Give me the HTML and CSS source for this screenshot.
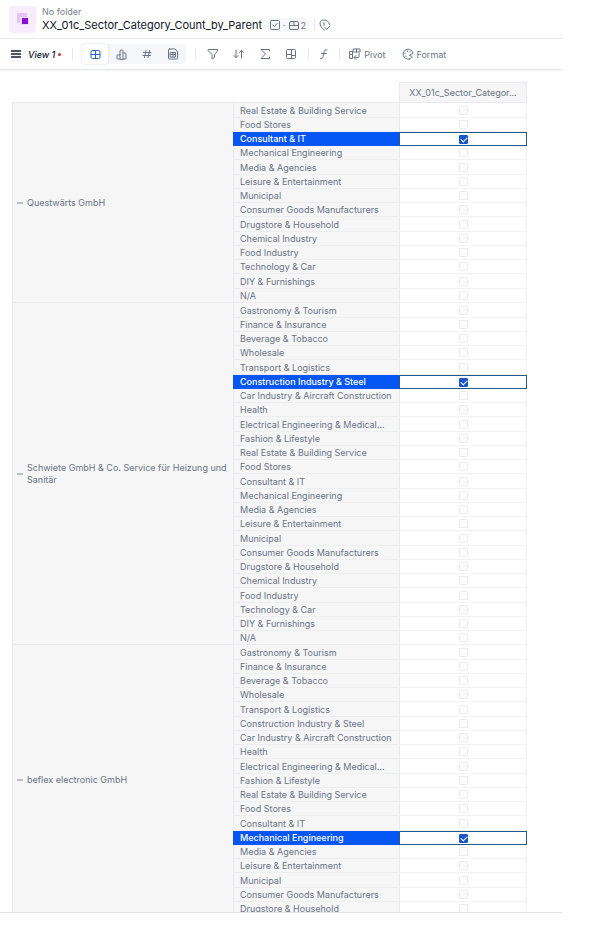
FILE: index.html
```html
<!DOCTYPE html>
<html lang="en">
<head>
  <meta charset="UTF-8">
  <meta name="viewport" content="width=device-width, initial-scale=1.0">
  <title>XX_01c_Sector_Category_Count_by_Parent</title>
  <link rel="stylesheet" href="styles.css">
</head>
<body>
  <div class="app">
    <header class="header">
      <div class="logo">
        <svg width="12" height="12" viewBox="0 0 12 12">
          <rect width="10" height="10" rx="1" fill="#e3c5f7"/>
          <rect x="3" y="4" width="9" height="8" rx="1" fill="#f0dcfb"/>
          <rect x="5" y="5" width="6" height="6" fill="#8a0fd6"/>
        </svg>
      </div>
      <div class="heading">
        <a class="folder" href="#">No folder</a>
        <div class="title-row">
          <h1 class="title">XX_01c_Sector_Category_Count_by_Parent</h1>
          <button class="badge" aria-label="Boolean metric, 2 dimensions">
            <svg class="icon" width="10" height="10" viewBox="0 0 20 20"><rect x="1" y="1" width="18" height="18" rx="2"/><path d="M6 10l3 3 5-6"/></svg>
            <span>·</span>
            <span class="badge-count"><svg class="icon" width="10" height="10" viewBox="0 0 20 20"><rect x="1" y="3" width="18" height="16" rx="3"/><path d="M1 11h18M10 3v8"/></svg>2</span>
          </button>
          <span class="divider"></span>
          <button class="tool-btn" aria-label="Access">
            <svg class="icon" width="12" height="12" viewBox="0 0 24 24"><path d="M11 22C5 18 2 14 2 8c0-3 3-6 8-6s10 3 11 9M10 7v6M12 17l3 4 7-7"/></svg>
          </button>
        </div>
      </div>
    </header>

    <nav class="toolbar">
      <button class="tool-btn view-btn">
        <svg class="icon icon-menu" width="10" height="10" viewBox="0 0 10 10"><path d="M0 2h10M0 5h10M0 8h10"/></svg>
        <span class="view-name">View 1</span>
        <span class="dot"></span>
      </button>
      <span class="divider"></span>
      <div class="switcher">
        <button class="switch-btn active" aria-label="Grid">
          <svg class="icon" width="11" height="11" viewBox="0 0 22 22"><rect x="2" y="3" width="18" height="16" rx="3"/><path d="M11 3v16M2 11h18"/></svg>
        </button>
        <button class="switch-btn" aria-label="Chart">
          <svg class="icon" width="11" height="11" viewBox="0 0 22 22"><path d="M8 20H3a1 1 0 0 1-1-1v-6a1 1 0 0 1 1-1h5M8 20V4a2 2 0 0 1 2-2h2a2 2 0 0 1 2 2v16zM14 8h4a2 2 0 0 1 2 2v9a1 1 0 0 1-1 1h-5"/></svg>
        </button>
        <button class="switch-btn" aria-label="Number">
          <svg class="icon" width="10" height="10" viewBox="0 0 20 20"><path d="M8 3L5 17M15 3l-3 14M3 7h15M2 13h15"/></svg>
        </button>
        <button class="switch-btn" aria-label="Table">
          <svg class="icon" width="12" height="12" viewBox="0 0 24 24"><path d="M5 2h11l5 5v13a2 2 0 0 1-2 2H5a2 2 0 0 1-2-2V4a2 2 0 0 1 2-2zM7 9h10v9H7zM12 9v9M7 13h10"/></svg>
        </button>
      </div>
      <span class="divider"></span>
      <div class="tools">
        <button class="tool-btn" aria-label="Filter">
          <svg class="icon" width="12" height="12" viewBox="0 0 24 24"><path d="M3 3h18v3l-6 7v6l-5 3v-9L3 6z"/></svg>
        </button>
        <button class="tool-btn" aria-label="Sort">
          <svg class="icon" width="12" height="12" viewBox="0 0 24 24"><path d="M6 4v15M2 15l4 4 4-4M17 20V5M13 9l4-4 4 4"/></svg>
        </button>
        <button class="tool-btn" aria-label="Aggregate">
          <svg class="icon" width="12" height="12" viewBox="0 0 24 24"><path d="M21 6V3H4l9 9-9 9h17v-3"/></svg>
        </button>
        <button class="tool-btn" aria-label="Layout">
          <svg class="icon" width="12" height="12" viewBox="0 0 24 24"><rect x="3" y="3" width="18" height="18" rx="2"/><path d="M13 3v18M3 13h10M13 15h8"/></svg>
        </button>
      </div>
      <span class="divider"></span>
      <button class="tool-btn" aria-label="Formula">
        <svg class="icon" width="12" height="12" viewBox="0 0 24 24"><path d="M18 4c-4-2-5 1-6 5l-2 8c-1 4-2 5-5 4M7 11h10"/></svg>
      </button>
      <span class="divider"></span>
      <div class="actions">
        <button class="tool-btn">
          <svg class="icon" width="12" height="12" viewBox="0 0 24 24"><path d="M9 2h13v6H9zM15 2v6M2 7h5v14H2zM2 13h5M20 11v6a2 2 0 0 1-2 2h-7M14 15l-4 4 4 4"/></svg>
          Pivot
        </button>
        <button class="tool-btn">
          <svg class="icon" width="12" height="12" viewBox="0 0 24 24"><path d="M15 22A10 10 0 1 1 22 10c0 4-7 1-7 6 2 0 4-1 5 1s-2 4-5 5zM8 16v1M6 10v1M11 6v1M16 7v1"/></svg>
          Format
        </button>
      </div>
    </nav>

    <main class="sheet">
      <table class="grid">
        <colgroup>
          <col class="col-parent">
          <col class="col-sector">
          <col>
        </colgroup>
        <thead>
          <tr>
            <td class="corner" colspan="2"></td>
            <th class="metric" scope="col">XX_01c_Sector_Categor...</th>
          </tr>
        </thead>
      </table>
    </main>
    <footer class="footer"></footer>
  </div>

  <script>
    const sectors = [
      "Gastronomy & Tourism", "Finance & Insurance", "Beverage & Tobacco", "Wholesale",
      "Transport & Logistics", "Construction Industry & Steel", "Car Industry & Aircraft Construction",
      "Health", "Electrical Engineering & Medical...", "Fashion & Lifestyle",
      "Real Estate & Building Service", "Food Stores", "Consultant & IT", "Mechanical Engineering",
      "Media & Agencies", "Leisure & Entertainment", "Municipal", "Consumer Goods Manufacturers",
      "Drugstore & Household", "Chemical Industry", "Food Industry", "Technology & Car",
      "DIY & Furnishings", "N/A"
    ];

    // from / to: the slice of sectors shown for each parent
    const parents = [
      { name: "Questwärts GmbH", from: 10, to: 24, selected: "Consultant & IT" },
      { name: "Schwiete GmbH & Co. Service für Heizung und Sanitär", from: 0, to: 24, selected: "Construction Industry & Steel" },
      { name: "beflex electronic GmbH", from: 0, to: 19, selected: "Mechanical Engineering" }
    ];

    const grid = document.querySelector(".grid");

    parents.forEach((parent) => {
      const group = document.createElement("tbody");
      const rows = sectors.slice(parent.from, parent.to);

      rows.forEach((sector, i) => {
        const row = group.insertRow();
        const isSelected = sector === parent.selected;
        row.className = isSelected ? "row selected" : "row";

        if (i === 0) {
          const head = document.createElement("th");
          head.className = "parent";
          head.scope = "rowgroup";
          head.rowSpan = rows.length;
          head.innerHTML = '<div class="parent-inner"><button class="collapse" aria-label="Collapse"></button><span></span></div>';
          head.querySelector("span").textContent = parent.name;
          row.appendChild(head);
        }

        const label = document.createElement("th");
        label.className = "sector";
        label.scope = "row";
        label.textContent = sector;
        row.appendChild(label);

        const box = document.createElement("input");
        box.type = "checkbox";
        box.className = "check";
        box.checked = isSelected;
        box.setAttribute("aria-label", parent.name + ", " + sector);
        const cell = row.insertCell();
        cell.className = "value";
        cell.appendChild(box);
      });

      grid.appendChild(group);
    });
  </script>
</body>
</html>
```
FILE: styles.css
```css
/* Reset */
* {
  margin: 0;
  padding: 0;
  box-sizing: border-box;
}

body {
  font-family: Inter, "Liberation Sans", sans-serif;
  font-size: 9px;
  color: #6b7486;
  background-color: #fff;
}

button {
  font: inherit;
  color: inherit;
  background: none;
  border: none;
  cursor: pointer;
}

.app {
  display: flex;
  flex-direction: column;
  height: 100vh;
  margin-right: 30px;
}

.icon {
  display: block;
  flex: none;
  fill: none;
  stroke: currentColor;
  stroke-width: 2;
  stroke-linecap: round;
  stroke-linejoin: round;
}

.divider {
  width: 1px;
  height: 12px;
  background-color: #e3e6ea;
}

/* Header */
.header {
  display: flex;
  align-items: center;
  gap: 6px;
  height: 39px;
  padding: 0 9px;
  border-bottom: 1px solid #e6e7ea;
}

.logo {
  display: flex;
  align-items: center;
  justify-content: center;
  width: 27px;
  height: 27px;
  border-radius: 3px;
  background-color: #f7edff;
}

.folder {
  display: block;
  line-height: 12px;
  color: #7c8493;
  text-decoration: none;
}

.title-row {
  display: flex;
  align-items: center;
  gap: 4px;
}

.title {
  font-size: 11px;
  font-weight: 400;
  line-height: 14px;
  color: #0d1526;
}

.badge {
  display: flex;
  align-items: center;
  gap: 3px;
  height: 14px;
  padding: 0 4px;
  border-radius: 7px;
  background-color: #f5f7f8;
}

.badge-count {
  display: flex;
  align-items: center;
  gap: 2px;
}

/* Toolbar */
.toolbar {
  display: flex;
  align-items: center;
  gap: 9px;
  height: 31px;
  padding: 0 11px;
  border-bottom: 1px solid #e6e7ea;
  box-shadow: 0 1px 1px rgba(20, 40, 70, 0.04);
}

.tool-btn {
  display: flex;
  align-items: center;
  gap: 3px;
}

.view-btn {
  padding-right: 2px;
  color: #10192b;
  font-weight: 500;
}

.view-name {
  margin-left: 4px;
  font-style: italic;
}

.icon-menu {
  stroke: #4b5362;
  stroke-linecap: butt;
}

.dot {
  width: 3px;
  height: 3px;
  border-radius: 50%;
  background-color: #c9303c;
}

.switcher {
  display: flex;
  height: 20px;
  border-radius: 4px;
  background-color: #f4f6f7;
}

.switch-btn {
  display: flex;
  align-items: center;
  justify-content: center;
  width: 26px;
  border-radius: 3px;
}

.switch-btn.active {
  color: #2468c4;
  background-color: #fff;
  box-shadow: 0 0 2px rgba(20, 40, 70, 0.2);
}

.tools {
  display: flex;
  gap: 14px;
  margin: 0 2px;
}

.actions {
  display: flex;
  gap: 16px;
}

/* Pivot grid */
.sheet {
  flex: 1;
  min-height: 0;
  padding: 12px 35px 0 12px;
  overflow: hidden;
}

.grid {
  width: 100%;
  table-layout: fixed;
  border-collapse: separate;
  border-spacing: 0;
}

.col-parent {
  width: 221px;
}

.col-sector {
  width: 166px;
}

.grid th {
  font-weight: 400;
  text-align: left;
  background-color: #f6f6f7;
}

.corner {
  border-bottom: 1px solid #e9ebee;
}

.grid .metric {
  height: 21px;
  text-align: center;
  white-space: nowrap;
  border: 1px solid #e8eaed;
}

/* One row in four takes the spare pixel */
.row {
  height: 14px;
  line-height: 13px;
}

.row:nth-child(4n+1) {
  height: 15px;
}

.parent {
  padding: 0 4px;
  vertical-align: middle;
  border-left: 1px solid #e6e8eb;
  border-bottom: 1px solid #e9ebee;
}

.parent-inner {
  display: flex;
  align-items: center;
  gap: 4px;
  line-height: 12px;
}

.collapse {
  flex: none;
  width: 6px;
  height: 2px;
  background-color: #b9bec7;
}

.sector {
  padding-left: 6px;
  white-space: nowrap;
  border-left: 1px solid #e9ebee;
  border-bottom: 1px solid #edeef0;
}

.value {
  text-align: center;
  vertical-align: middle;
  border: 1px solid #f1f2f4;
  border-top: none;
  border-left-color: #e8eaed;
}

.grid .selected .sector {
  font-weight: 500;
  color: #fff;
  background-color: #0556f3;
  border-color: #0556f3;
}

.selected .value {
  border: none;
  box-shadow: inset 0 0 0 1px #23588f;
}

.check {
  display: block;
  width: 9px;
  height: 9px;
  margin: 0 auto;
  appearance: none;
  border: 1px solid #e9ebef;
  border-radius: 2px;
  background-color: #fff;
}

.check:checked {
  border-color: #1656c9;
  border-radius: 1px;
  background-color: #1656c9;
}

.check:checked::before {
  content: "";
  display: block;
  width: 5px;
  height: 3px;
  margin: 1px;
  border-left: 1px solid #fff;
  border-bottom: 1px solid #fff;
  transform: rotate(-45deg);
}

/* Footer */
.footer {
  height: 28px;
  border-top: 1px solid #dfe1e4;
}
```
